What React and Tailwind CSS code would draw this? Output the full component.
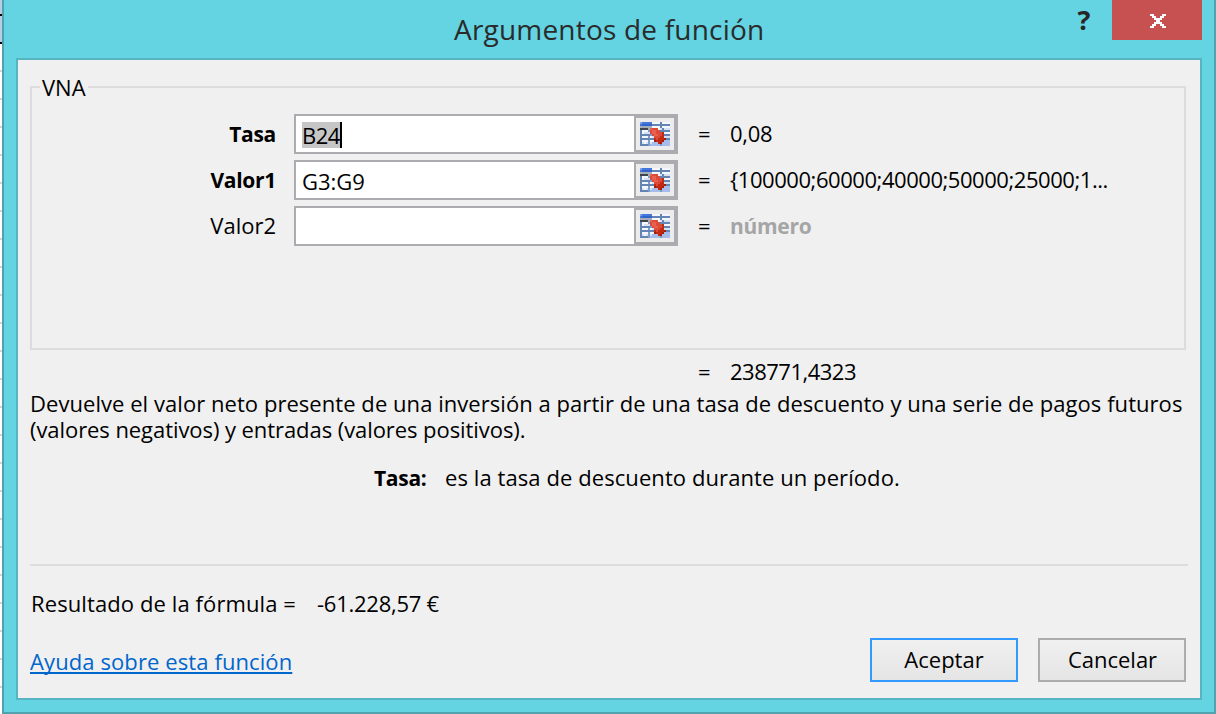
const PALETTE = {
  b: "#4676dc", B: "#3563cc", l: "#7ba4ee", k: "#3f4650", g: "#a3adb8",
  s: "#6484b4", t: "#7e9cc8", w: "#f4f8fe", p: "#d3e0f5", q: "#a4bdea",
  r: "#dd4b38", R: "#c22a14", o: "#e8604f", d: "#a81c0a",
};

const RANGE_ICON = [
  "lbbbbbwwwwswwww",
  "bBBBBBsssssssss",
  "ggggggwwwwswwww",
  "kkkkgorrrwpsppp",
  "swwwtroorrsssss",
  "swppproorrrRwww",
  "ssssstroorrRsss",
  "swwwtwprrrRRppp",
  "sssssssRrRRRdss",
  "swwwtwwdRRRdqqq",
  "spwptpqqqRdqqqq",
  "sssstqqqqqtqqqq",
];

const CLOSE_ICON = ["xx....xx", ".xx..xx.", "..xxxx..", "...xx...", "..xxxx..", ".xx..xx.", "xx....xx"];

function PixelIcon({ rows, palette, className }) {
  return (
    <svg
      className={className}
      width={rows[0].length * 2}
      height={rows.length * 2}
      viewBox={`0 0 ${rows[0].length} ${rows.length}`}
      shapeRendering="crispEdges"
      aria-hidden="true"
    >
      {rows.flatMap((row, y) =>
        [...row].map((c, x) =>
          palette[c] ? <rect key={`${x}-${y}`} x={x} y={y} width="1" height="1" fill={palette[c]} /> : null
        )
      )}
    </svg>
  );
}

function ArgumentRow({ label, bold, children, result, resultClass = "pb-[2px]" }) {
  return (
    <div className="flex h-10 items-center">
      <span className={`w-[244px] text-right ${bold ? "text-[21px] font-bold tracking-[-0.3px]" : "pb-[2px]"}`}>{label}</span>
      <div className="ml-[18px] flex h-10 w-[384px] border-2 border-[#ababb0] bg-white">
        <div className="flex flex-1 items-center pt-[2px] pb-[1px] pl-[6px]">{children}</div>
        <button className="flex w-[42px] items-center justify-center border-2 border-[#ababb0] bg-[#ececec]">
          <PixelIcon rows={RANGE_ICON} palette={PALETTE} />
        </button>
      </div>
      <span className="ml-5 w-8 pb-[2px]">=</span>
      <span className={resultClass}>{result}</span>
    </div>
  );
}

export default function App() {
  return (
    <div className="flex h-[714px] w-[1216px] overflow-hidden bg-white font-['Open_Sans','Noto_Sans',sans-serif] text-[22px] leading-[26px] whitespace-nowrap text-black">
      <div className="flex w-[2px] flex-col">
        <div className="h-[14px] bg-[#b8cce4]" />
        <div className="h-[2px] bg-black" />
        <div className="h-[26px] bg-[#b8cce4]" />
        <div className="h-[2px] bg-black" />
        <div className="flex-1 bg-[repeating-linear-gradient(to_bottom,#fff_0px,#fff_26px,#d4d4d4_26px,#d4d4d4_28px)]" />
      </div>

      <div className="flex flex-1 flex-col border-x-2 border-b-2 border-[#4fa3ae] bg-[#64d3e2] px-3 pb-3">
        <header className="flex h-[58px] shrink-0 items-start">
          <h1 className="flex-1 pt-[9px] pl-[438px] text-[28px] leading-10 tracking-[0.2px] text-[#2b2b2b]">
            Argumentos de función
          </h1>
          <button className="mr-[20px] h-10 w-[16px] text-center text-[27px] leading-10 font-bold text-[#262626]">?</button>
          <button className="flex h-10 w-[90px] items-center justify-center bg-[#c75050] pt-[2px]">
            <PixelIcon rows={CLOSE_ICON} palette={{ x: "#ffffff" }} className="ml-[2px]" />
          </button>
        </header>

        <main className="flex flex-1 flex-col border-2 border-[#57b5c1] bg-[#f0f0f0] pt-[26px] pr-[14px] pl-3">
          <section className="flex h-[264px] flex-col border-2 border-[#dcdcdc]">
            <div className="-mt-[14px] ml-2 h-7 w-12 bg-[#f0f0f0] pl-[2px] leading-[26px]">VNA</div>
            <div className="mt-3 flex flex-col gap-[6px]">
              <ArgumentRow label="Tasa" bold result="0,08" resultClass="pb-[2px] tracking-[-0.3px]">
                <span className="flex h-[26px] items-center bg-[#c6c6c6] tracking-[-0.5px]">B24</span>
                <span className="h-[26px] w-[2px] bg-black" />
              </ArgumentRow>
              <ArgumentRow
                label="Valor1"
                bold
                result="{100000;60000;40000;50000;25000;1..."
                resultClass="pb-[2px] tracking-[-0.45px]"
              >
                G3:G9
              </ArgumentRow>
              <ArgumentRow label="Valor2" result="número" resultClass="text-[21px] font-bold tracking-[-0.3px] text-[#a5a5a5]" />
            </div>
          </section>

          <div className="flex h-[40px] items-center pt-[2px] pl-[668px]">
            <span className="w-8">=</span>
            <span className="tracking-[-0.5px]">238771,4323</span>
          </div>

          <p>
            <span className="block tracking-[0.05px]">
              Devuelve el valor neto presente de una inversión a partir de una tasa de descuento y una serie de pagos futuros
            </span>
            <span className="block tracking-[-0.07px]">(valores negativos) y entradas (valores positivos).</span>
          </p>

          <div className="mt-[22px] flex pl-[344px]">
            <span className="w-[71px] pt-px text-[21px] font-bold tracking-[-0.3px]">Tasa:</span>
            <span className="tracking-[0.08px]">es la tasa de descuento durante un período.</span>
          </div>

          <div className="mt-[73px] -mr-[2px] h-[2px] shrink-0 bg-[#dcdcdc]" />

          <div className="mt-[24px] flex pl-px">
            <span className="w-[286px] tracking-[0.1px]">Resultado de la fórmula =</span>
            <span className="tracking-[-0.25px]">-61.228,57 €</span>
          </div>

          <footer className="mt-[22px] flex items-center">
            <a className="flex-1 pt-px tracking-[0.1px] text-[#0066cc] underline decoration-2 underline-offset-[2px] [text-decoration-skip-ink:none]">
              Ayuda sobre esta función
            </a>
            <button className="h-11 w-[148px] border-2 border-[#3399ff] bg-linear-to-b from-[#f0f0f0] to-[#e5e5e5] pb-[2px]">Aceptar</button>
            <button className="ml-5 h-11 w-[148px] border-2 border-[#acacac] bg-linear-to-b from-[#f0f0f0] to-[#e5e5e5] pb-[2px] pl-px">
              Cancelar
            </button>
          </footer>
        </main>
      </div>
    </div>
  );
}
